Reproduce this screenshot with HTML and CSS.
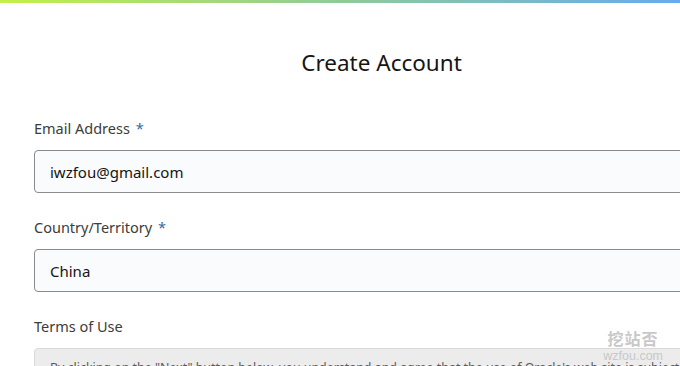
FILE: index.html
```html
<!DOCTYPE html>
<html lang="en">
<head>
<meta charset="utf-8">
<title>Create Account</title>
<link rel="stylesheet" href="styles.css">
</head>
<body>
<div class="topbar"></div>
<main class="form">
  <h1 class="title">Create Account</h1>
  <div class="field">
    <label class="label">Email Address <span class="req">*</span></label>
    <div class="input">iwzfou@gmail.com</div>
  </div>
  <div class="field">
    <label class="label">Country/Territory <span class="req">*</span></label>
    <div class="input">China</div>
  </div>
  <div class="field">
    <label class="label">Terms of Use</label>
    <div class="terms">By clicking on the "Next" button below, you understand and agree that the use of Oracle's web site is subject to the Oracle.com Terms of Use.</div>
  </div>
</main>
<div class="watermark">
  <span class="wm-cn">挖站否</span>
  <span class="wm-en">wzfou.com</span>
</div>
</body>
</html>
```
FILE: styles.css
```css
html, body {
  margin: 0;
  padding: 0;
  background: #ffffff;
  overflow: hidden;
}
body {
  width: 680px;
  height: 366px;
  position: relative;
  font-family: "Noto Sans", "Open Sans", sans-serif;
  color: #2f2f2f;
}
.topbar {
  height: 3px;
  background: linear-gradient(90deg, #c4ef4a 0%, #8fcb98 50%, #66abf0 100%);
}
.form {
  width: 695px;
  margin-left: 34px;
}
.title {
  margin: 44px 0 39px;
  font-size: 22.5px;
  line-height: 32px;
  font-weight: 400;
  text-align: center;
  color: #161513;
}
.field {
  display: flex;
  flex-direction: column;
  margin-bottom: 24px;
}
.label {
  font-size: 14.5px;
  line-height: 20px;
  color: #3c3c3c;
  margin-bottom: 12px;
}
.req {
  color: #2e6cad;
  margin-left: 2px;
}
.input {
  box-sizing: border-box;
  height: 43px;
  display: flex;
  align-items: center;
  padding: 0 15px;
  border: 1px solid #8b8b8b;
  border-radius: 4px;
  background: #f9fbfd;
  font-size: 15px;
  color: #161513;
}
.terms {
  box-sizing: border-box;
  border: 1px solid #d9d9d9;
  border-radius: 4px;
  background: #ececec;
  padding: 9px 15px;
  font-size: 12.4px;
  line-height: 20px;
  color: #5a5a5a;
  white-space: nowrap;
  overflow: hidden;
}
.watermark {
  position: absolute;
  right: 17px;
  top: 328px;
  display: flex;
  flex-direction: column;
  align-items: center;
  color: #c8c8c8;
}
.wm-cn {
  font-family: "Noto Sans CJK SC", sans-serif;
  font-weight: 700;
  font-size: 16px;
  line-height: 21px;
  letter-spacing: 1px;
}
.wm-en {
  font-family: "Liberation Sans", sans-serif;
  font-size: 12.5px;
  line-height: 14px;
}
```
